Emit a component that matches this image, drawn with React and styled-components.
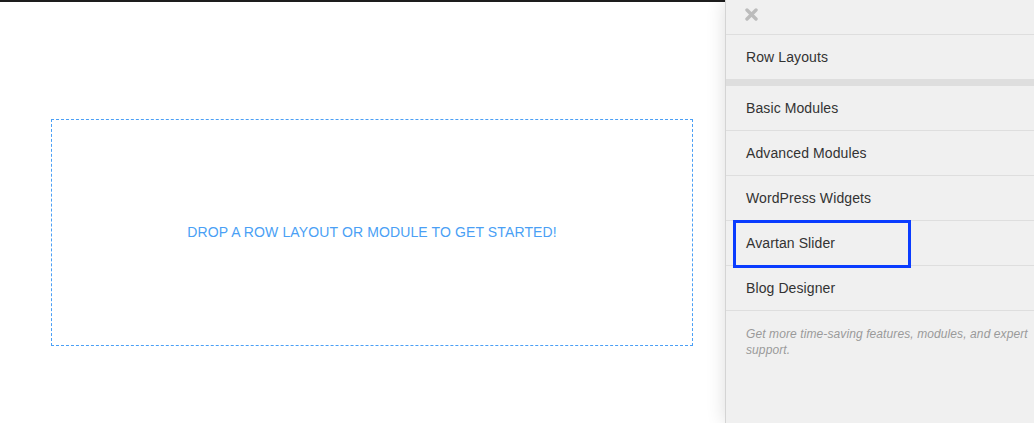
import styled, { createGlobalStyle } from "styled-components";

const GlobalStyle = createGlobalStyle`
  html, body {
    margin: 0;
    padding: 0;
    background: #fff;
    font-family: "Liberation Sans", Arial, sans-serif;
  }
`;

const groups = [
  ["Row Layouts"],
  ["Basic Modules", "Advanced Modules", "WordPress Widgets", "Avartan Slider", "Blog Designer"],
];

function CloseIcon() {
  return (
    <svg width="13" height="13" viewBox="0 0 13 13">
      <path
        d="M2 2 L11 11 M11 2 L2 11"
        stroke="#bcbcbc"
        strokeWidth="3.4"
        strokeLinecap="round"
      />
    </svg>
  );
}

function App() {
  return (
    <>
      <GlobalStyle />
      <Page>
        <Canvas>
          <DropZone>DROP A ROW LAYOUT OR MODULE TO GET STARTED!</DropZone>
        </Canvas>
        <Panel>
          <PanelHead>
            <CloseIcon />
          </PanelHead>
          {groups.map((group, i) => (
            <Group key={i} $gap={i > 0} $last={i === groups.length - 1}>
              {group.map((name) => (
                <Item key={name}>
                  {name}
                  {name === "Avartan Slider" && <Highlight />}
                </Item>
              ))}
            </Group>
          ))}
          <Upsell>Get more time-saving features, modules, and expert support.</Upsell>
        </Panel>
      </Page>
    </>
  );
}

const Page = styled.div`
  display: flex;
  width: 1034px;
  height: 423px;
  overflow: hidden;
`;

const Canvas = styled.div`
  flex: 1;
  border-top: 2px solid #1d1d1d;
  padding: 117px 0 0 51px;
  box-sizing: border-box;
`;

const DropZone = styled.div`
  width: 642px;
  height: 227px;
  box-sizing: border-box;
  border: 1px dashed #4a9ff5;
  display: flex;
  align-items: center;
  justify-content: center;
  color: #4a9ff5;
  font-size: 14px;
  letter-spacing: 0.12px;
  padding-bottom: 1px;
`;

const Panel = styled.div`
  width: 308px;
  flex-shrink: 0;
  background: #f0f0f0;
  border-left: 1px solid #d4d4d4;
  box-shadow: 0 0 18px rgba(0, 0, 0, 0.14);
  position: relative;
  z-index: 1;
`;

const PanelHead = styled.div`
  height: 35px;
  display: flex;
  align-items: center;
  padding-left: 19px;
  padding-bottom: 6px;
  box-sizing: border-box;
  border-bottom: 1px solid #dedede;
`;

const Group = styled.div`
  border-top: ${(p) => (p.$gap ? "7px solid #dedede" : "none")};
  border-bottom: ${(p) => (p.$last ? "1px solid #dedede" : "none")};
`;

const Item = styled.div`
  position: relative;
  height: 44px;
  display: flex;
  align-items: center;
  padding-left: 20px;
  color: #333;
  font-size: 14px;
  letter-spacing: 0.1px;

  & + & {
    border-top: 1px solid #dedede;
  }
`;

const Highlight = styled.div`
  position: absolute;
  z-index: 2;
  left: 7px;
  top: -1px;
  width: 178px;
  height: 48px;
  box-sizing: border-box;
  border: 3px solid #0a3cff;
`;

const Upsell = styled.p`
  margin: 0;
  padding: 15px 4px 15px 20px;
  color: #9a9a9a;
  font-size: 12px;
  font-style: italic;
  line-height: 16px;
  letter-spacing: 0.1px;
`;

export default App;
